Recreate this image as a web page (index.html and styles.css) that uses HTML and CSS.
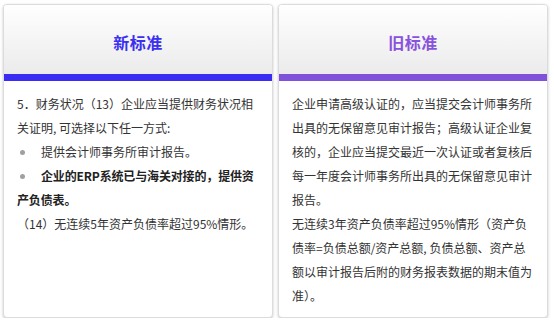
FILE: index.html
```html
<!DOCTYPE html>
<html lang="zh">
<head>
<meta charset="utf-8">
<link rel="stylesheet" href="styles.css">
</head>
<body>
<div class="wrap">
  <div class="card">
    <div class="head"><span class="title title-new">新标准</span></div>
    <div class="bar bar-new"></div>
    <div class="body">
      <p>5．财务状况（13）企业应当提供财务状况相关证明, 可选择以下任一方式:</p>
      <p><span class="dot"></span>提供会计师事务所审计报告。</p>
      <p class="bold"><span class="dot"></span>企业的ERP系统已与海关对接的，提供资产负债表。</p>
      <p>（14）无连续5年资产负债率超过95%情形。</p>
    </div>
  </div>
  <div class="card">
    <div class="head"><span class="title title-old">旧标准</span></div>
    <div class="bar bar-old"></div>
    <div class="body">
      <p>企业申请高级认证的，应当提交会计师事务所出具的无保留意见审计报告；高级认证企业复核的，企业应当提交最近一次认证或者复核后每一年度会计师事务所出具的无保留意见审计报告。</p>
      <p>无连续3年资产负债率超过95%情形（资产负债率=负债总额/资产总额, 负债总额、资产总额以审计报告后附的财务报表数据的期末值为准）。</p>
    </div>
  </div>
</div>
</body>
</html>
```
FILE: styles.css
```css
html, body {
  margin: 0;
  padding: 0;
  background: #fff;
}
body {
  font-family: "Noto Sans CJK SC", "Noto Sans", sans-serif;
  color: #333;
}
.wrap {
  display: flex;
  gap: 5px;
  padding: 4px 0 0 3px;
  height: 314px;
}
.card {
  width: 270px;
  box-sizing: border-box;
  border: 1px solid #dcdcdc;
  border-radius: 4px;
  box-shadow: 0 1px 3px rgba(0, 0, 0, 0.22);
  background: #fff;
  display: flex;
  flex-direction: column;
  overflow: hidden;
}
.head {
  height: 69px;
  background: linear-gradient(#ffffff, #ebebeb);
  display: flex;
  align-items: center;
  justify-content: center;
  padding-top: 4px;
  box-sizing: border-box;
}
.title {
  font-size: 16px;
  font-weight: bold;
  letter-spacing: 0.5px;
}
.title-new { color: #3b2ff0; }
.title-old { color: #8852dc; }
.bar { height: 7px; }
.bar-new { background: #3a2cf2; }
.bar-old { background: #8052da; }
.body {
  padding: 11px 13px 0 13px;
  font-size: 12px;
  line-height: 24px;
}
.body p { margin: 0; }
.bold { font-weight: bold; color: #222; letter-spacing: -0.15px; }
.dot {
  display: inline-block;
  width: 5px;
  height: 5px;
  border-radius: 50%;
  background: #a0a0a0;
  margin: 0 16px 2px 3px;
  vertical-align: middle;
}
```
